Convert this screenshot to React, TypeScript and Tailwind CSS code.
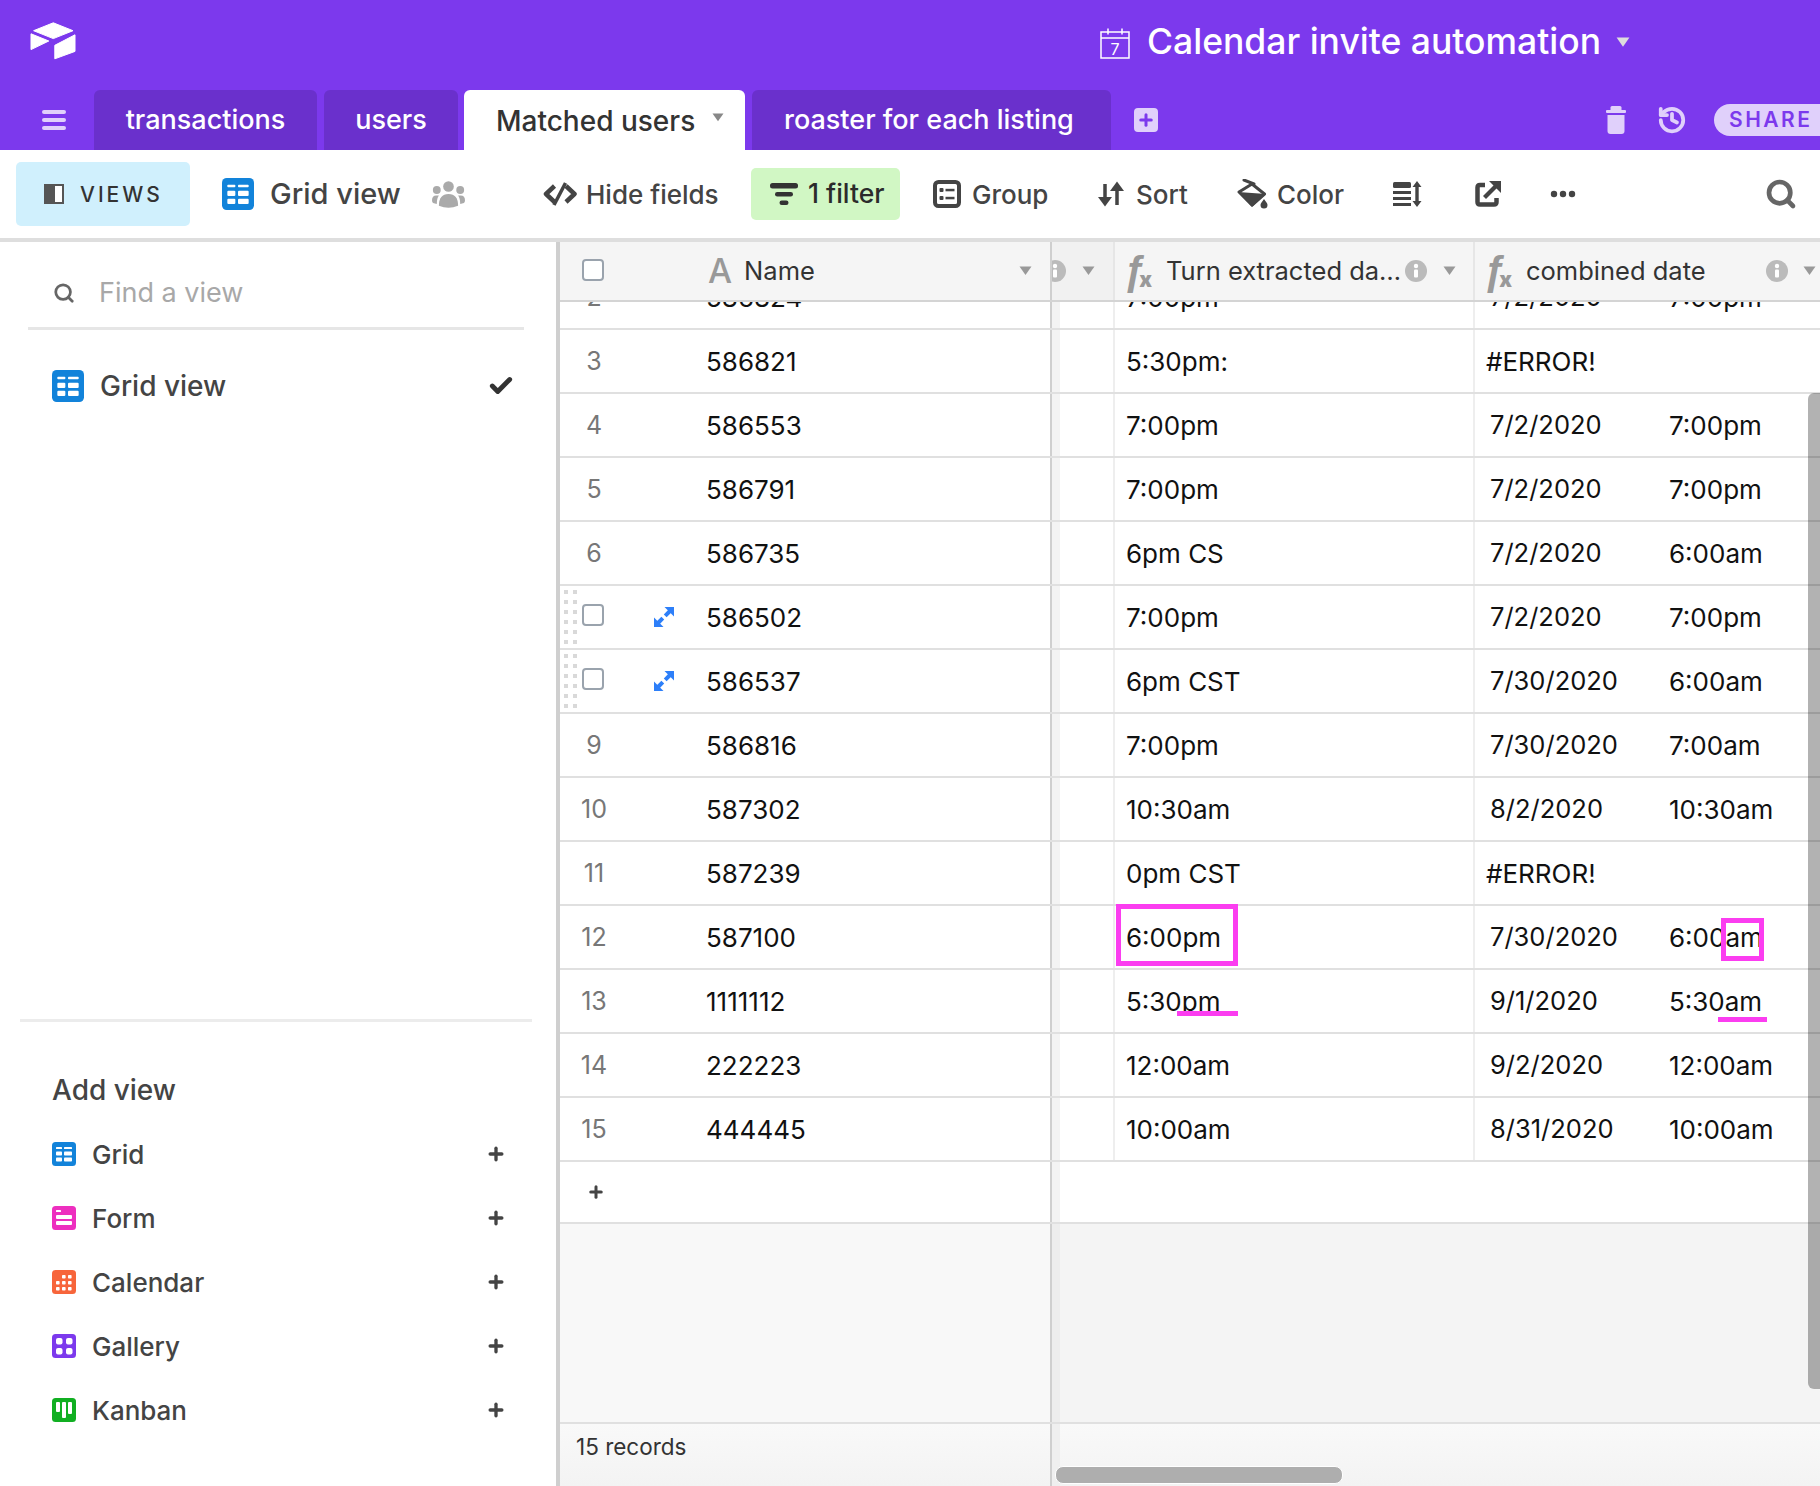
import { Check, History, Plus, Search } from "lucide-react";

const ROWS = [
  { n: "2", name: "586824", turn: "7:00pm", date: "7/2/2020", time: "7:00pm" },
  { n: "3", name: "586821", turn: "5:30pm:", date: "#ERROR!", time: "" },
  { n: "4", name: "586553", turn: "7:00pm", date: "7/2/2020", time: "7:00pm" },
  { n: "5", name: "586791", turn: "7:00pm", date: "7/2/2020", time: "7:00pm" },
  { n: "6", name: "586735", turn: "6pm CS", date: "7/2/2020", time: "6:00am" },
  { n: "7", name: "586502", turn: "7:00pm", date: "7/2/2020", time: "7:00pm", hover: true },
  { n: "8", name: "586537", turn: "6pm CST", date: "7/30/2020", time: "6:00am", hover: true },
  { n: "9", name: "586816", turn: "7:00pm", date: "7/30/2020", time: "7:00am" },
  { n: "10", name: "587302", turn: "10:30am", date: "8/2/2020", time: "10:30am" },
  { n: "11", name: "587239", turn: "0pm CST", date: "#ERROR!", time: "" },
  { n: "12", name: "587100", turn: "6:00pm", date: "7/30/2020", time: "6:00am" },
  { n: "13", name: "1111112", turn: "5:30pm", date: "9/1/2020", time: "5:30am" },
  { n: "14", name: "222223", turn: "12:00am", date: "9/2/2020", time: "12:00am" },
  { n: "15", name: "444445", turn: "10:00am", date: "8/31/2020", time: "10:00am" },
];

function Logo() {
  return (
    <svg width="46" height="38" viewBox="0 0 46 38" fill="#fff" stroke="#fff" strokeWidth="1" strokeLinejoin="round">
      <path d="M23.300 .8L43 8.700 23.300 16.600 3.600 8.700z" />
      <path d="M1 11.800L18.800 19 1 27.600z" />
      <path d="M24.800 23.300L45 12.800V29.400L24.800 36.800z" />
    </svg>
  );
}

function CalendarIcon() {
  return (
    <svg width="30" height="32" viewBox="0 0 30 32" fill="none" stroke="#fff" strokeWidth="1.5">
      <rect x="1" y="5" width="28" height="26" />
      <path d="M1 11h28M8 1.500v6M22 1.500v6" />
      <text x="15" y="28" textAnchor="middle" fontSize="16" fill="#fff" stroke="none" fontFamily="Inter, sans-serif">
        7
      </text>
    </svg>
  );
}

function Caret({ color = "#999", w = 13 }: { color?: string; w?: number }) {
  return (
    <svg width={w} height={w * 0.72} viewBox="0 0 13 9.400" fill={color}>
      <path d="M.5 .5h12L6.500 9z" />
    </svg>
  );
}

function Info() {
  return (
    <svg width="22" height="22" viewBox="0 0 22 22">
      <circle cx="11" cy="11" r="11" fill="#bbb" />
      <rect x="9" y="9.500" width="4" height="8" rx="1" fill="#fff" />
      <circle cx="11" cy="6" r="2.200" fill="#fff" />
    </svg>
  );
}

function Fx() {
  return (
    <span className="flex items-baseline w-[30px] h-[34px] leading-[34px] text-[#999] overflow-visible">
      <span className="text-[40px] font-bold italic font-['Liberation_Sans',sans-serif] -ml-[3px]">ƒ</span>
      <span className="text-[21px] font-black -ml-[6px] translate-y-[2px]">x</span>
    </span>
  );
}

function ViewIcon({ type, size }: { type: string; size: number }) {
  const colors: Record<string, string> = {
    Grid: "#1283da",
    Form: "#ed2fbf",
    Calendar: "#f7653b",
    Gallery: "#7c39ed",
    Kanban: "#11af22",
  };
  return (
    <svg width={size} height={size} viewBox="0 0 24 24" className="shrink-0">
      <rect width="24" height="24" rx="3.500" fill={colors[type]} />
      <g fill="#fff">
        {type === "Grid" && (
          <>
            <rect x="4" y="5" width="6" height="2" rx=".6" />
            <rect x="12" y="5" width="8" height="2" rx=".6" />
            <rect x="4" y="9.500" width="6" height="4" rx=".8" />
            <rect x="12" y="9.500" width="8" height="4" rx=".8" />
            <rect x="4" y="15.500" width="6" height="4" rx=".8" />
            <rect x="12" y="15.500" width="8" height="4" rx=".8" />
          </>
        )}
        {type === "Form" && (
          <>
            <rect x="4" y="4" width="5" height="2" rx=".6" />
            <rect x="4" y="9" width="16" height="4" rx="1" />
            <rect x="4" y="15" width="16" height="4" rx="1" />
          </>
        )}
        {type === "Calendar" &&
          [
            [10, 5],
            [16, 5],
            [4, 11],
            [10, 11],
            [16, 11],
            [4, 17],
            [10, 17],
            [16, 17],
          ].map(([x, y]) => <rect key={`${x}-${y}`} x={x} y={y} width="3.600" height="3.600" rx=".8" />)}
        {type === "Gallery" &&
          [
            [4, 4],
            [14, 4],
            [4, 14],
            [14, 14],
          ].map(([x, y]) => <rect key={`${x}-${y}`} x={x} y={y} width="6.500" height="6.500" rx="2" />)}
        {type === "Kanban" && (
          <>
            <rect x="4" y="4" width="4" height="10" rx="1" />
            <rect x="10" y="4" width="4" height="16" rx="1" />
            <rect x="16" y="4" width="4" height="12" rx="1" />
          </>
        )}
      </g>
    </svg>
  );
}

function Expand() {
  return (
    <svg width="20" height="20" viewBox="0 0 20 20" fill="#2d7ff9">
      <path d="M10.500 0H20V9.500z" />
      <path d="M0 10.500L9.500 20H0z" />
      <path d="M4 16L8.800 11.200M11.200 8.800L16 4" stroke="#2d7ff9" strokeWidth="4" />
    </svg>
  );
}

function Checkbox() {
  return <span className="block w-[22px] h-[22px] rounded-[4px] border-2 border-[#9aa3ad] bg-white" />;
}

function DragDots() {
  const ys = [0, 10, 20, 30, 40, 50];
  return (
    <svg width="13" height="54" viewBox="0 0 13 54" fill="#d9d9d9">
      {ys.map((y) => (
        <g key={y}>
          <rect x="0" y={y} width="4" height="4" />
          <rect x="9" y={y} width="4" height="4" />
        </g>
      ))}
    </svg>
  );
}

function Toolbar() {
  return (
    <div className="h-[92px] border-b-4 border-[#dedede] flex items-center text-[#444] font-medium text-[26px] shrink-0">
      <div className="ml-[16px] w-[174px] h-[64px] shrink-0 rounded-[5px] bg-[#d0f0fd] flex items-center pl-[28px]">
        <svg width="20" height="20" viewBox="0 0 20 20">
          <rect x="1" y="1" width="18" height="18" fill="#fff" stroke="#555" strokeWidth="2" />
          <rect x="1" y="1" width="10" height="18" fill="#555" />
        </svg>
        <span className="ml-[16px] mt-[2px] text-[21px] tracking-[3px] text-[#333]">VIEWS</span>
      </div>
      <span className="ml-[32px] shrink-0">
        <ViewIcon type="Grid" size={32} />
      </span>
      <span className="ml-[16px] text-[29px] w-[144px] shrink-0 whitespace-nowrap">Grid view</span>
      <svg width="33" height="27" viewBox="0 0 31 25" fill="#aaa" className="ml-[18px] -mr-[3px] shrink-0">
        <circle cx="15.500" cy="5" r="5" />
        <circle cx="4.500" cy="8.300" r="3.700" />
        <circle cx="26.500" cy="8.300" r="3.700" />
        <path d="M6.500 23Q6.500 12 15.500 12Q24.500 12 24.500 23Q15.500 27 6.500 23z" />
        <path d="M0 18Q0 13.500 4 13.500H6.500Q4.500 16 4.500 21.500L1 20.500Q0 20 0 18z" />
        <path d="M31 18Q31 13.500 27 13.500H24.500Q26.500 16 26.500 21.500L30 20.500Q31 20 31 18z" />
      </svg>
      <svg width="34" height="26" viewBox="0 0 34 24" fill="none" stroke="#444" strokeWidth="4.500" strokeLinejoin="round" className="ml-[81px] shrink-0">
        <path d="M11.500 4L3 12l8.500 8" />
        <path d="M23 4l8.500 8-8.500 8" />
        <path d="M22.500 1L11 23" strokeWidth="3.500" />
      </svg>
      <span className="ml-[9px] w-[132px] shrink-0 whitespace-nowrap">Hide fields</span>
      <div className="ml-[33px] w-[149px] h-[52px] shrink-0 rounded-[5px] bg-[#d1f7c4] flex items-center pl-[19px] text-[#2b2b2b]">
        <svg width="28" height="24" viewBox="0 0 28 24" fill="#333">
          <rect x="0" y="1" width="28" height="5.500" rx="2.500" />
          <rect x="5" y="10" width="18" height="4.500" rx="2.200" />
          <rect x="9.500" y="18.500" width="9" height="4.500" rx="2.200" />
        </svg>
        <span className="ml-[10px] text-[26.500px]">1 filter</span>
      </div>
      <svg width="28" height="28" viewBox="0 0 28 28" fill="#444" className="ml-[33px] shrink-0">
        <rect x="2" y="2" width="24" height="24" rx="3.500" fill="none" stroke="#444" strokeWidth="4" />
        <rect x="6.500" y="8" width="4" height="4" rx="1" />
        <rect x="6.500" y="16" width="4" height="4" rx="1" />
        <rect x="12.500" y="8.800" width="9" height="2.500" />
        <rect x="12.500" y="16.800" width="9" height="2.500" />
      </svg>
      <span className="ml-[11px] w-[75px] shrink-0">Group</span>
      <svg width="26" height="26" viewBox="0 0 26 26" fill="#444" className="ml-[51px] shrink-0">
        <path d="M7 3v18M19 24V6" stroke="#444" strokeWidth="3.500" />
        <path d="M0 16h14l-7 9.500z" />
        <path d="M12 10h14L19 .5z" />
      </svg>
      <span className="ml-[12px] w-[52px] shrink-0">Sort</span>
      <svg width="31" height="30" viewBox="0 0 31 30" fill="#444" className="ml-[49px] shrink-0">
        <path d="M7 1L17 5" stroke="#444" strokeWidth="3" strokeLinecap="round" />
        <path d="M2 13L15 5l12.500 10L15 26z" fill="#fff" stroke="#444" strokeWidth="3" strokeLinejoin="round" />
        <path d="M1 13L29 15 15 28z" />
        <path d="M27 20c-2 3-3.500 4-3.500 6a3.500 3.500 0 0 0 7 0c0-2-1.500-3-3.500-6z" />
      </svg>
      <span className="ml-[9px] w-[66px] shrink-0">Color</span>
      <svg width="29" height="26" viewBox="0 0 29 26" className="ml-[50px] shrink-0" fill="#444">
        <rect x="0" y="1" width="18" height="6" rx="1.500" />
        <rect x="0" y="10" width="18" height="3" />
        <rect x="0" y="16" width="18" height="3" />
        <rect x="0" y="22" width="18" height="3" />
        <path d="M24 5v17" stroke="#444" strokeWidth="3.400" />
        <path d="M24 0l4.500 6h-9zM24 26l4.500-6h-9z" />
      </svg>
      <svg width="26" height="26" viewBox="0 0 26 26" fill="none" stroke="#444" strokeWidth="4.500" className="ml-[53px] shrink-0">
        <path d="M10 4H5Q2.500 4 2.500 6.500v14.500Q2.500 23.500 5 23.500h14q2.500 0 2.500-2.500V17" />
        <path d="M9.500 16.500L21 5" strokeWidth="4.200" />
        <path d="M14 0h12v12z" fill="#444" stroke="none" />
      </svg>
      <svg width="26" height="8" viewBox="0 0 26 8" fill="#444" className="ml-[49px] shrink-0">
        <circle cx="4" cy="4" r="3.200" />
        <circle cx="13" cy="4" r="3.200" />
        <circle cx="22" cy="4" r="3.200" />
      </svg>
      <Search size={32} strokeWidth={3.500} className="ml-auto mr-[23px] shrink-0 text-[#666]" />
    </div>
  );
}

function Sidebar() {
  return (
    <aside className="w-[560px] shrink-0 h-full border-r-4 border-[#cfcfcf] flex flex-col text-[#444]">
      <div className="mt-[24px] ml-[28px] mr-[32px] h-[64px] border-b-[3px] border-[#e6e6e6] flex items-center pb-[8px]">
        <Search size={22} strokeWidth={3} className="ml-[25px] text-[#666]" />
        <span className="ml-[24px] mt-[1px] text-[27px] text-[#a8a8a8]">Find a view</span>
      </div>
      <div className="mt-[26px] h-[60px] flex items-center pl-[52px] pr-[42px]">
        <ViewIcon type="Grid" size={32} />
        <span className="ml-[16px] text-[28px] font-medium">Grid view</span>
        <Check size={26} strokeWidth={4.500} className="ml-auto text-[#333]" />
      </div>
      <div className="mt-auto ml-[20px] mr-[24px] h-[3px] bg-[#ececec]" />
      <div className="mt-[50px] pl-[52px] text-[28px] font-medium leading-[36px]">Add view</div>
      <div className="mt-[14px] mb-[44px]">
        {["Grid", "Form", "Calendar", "Gallery", "Kanban"].map((v) => (
          <div key={v} className="h-[64px] flex items-center pl-[52px] pr-[50px]">
            <ViewIcon type={v} size={24} />
            <span className="ml-[16px] text-[26px] font-medium">{v}</span>
            <Plus size={20} strokeWidth={4} className="ml-auto text-[#444]" />
          </div>
        ))}
      </div>
    </aside>
  );
}

function GridHeader() {
  return (
    <div className="h-[60px] shrink-0 flex bg-[#f5f5f5] border-b-2 border-[#d4d4d4] text-[25.500px] text-[#333] z-10">
      <div className="w-[492px] shrink-0 border-r-2 border-[#cfcfcf] flex items-center">
        <span className="ml-[22px] -mt-[3px]">
          <Checkbox />
        </span>
        <span className="ml-[104px] text-[34px] leading-none font-medium text-[#999]">A</span>
        <span className="ml-[12px]">Name</span>
        <span className="ml-auto mr-[18px]">
          <Caret />
        </span>
      </div>
      <div className="w-[61px] shrink-0 flex items-center overflow-hidden bg-[#ececec]/40">
        <span className="-ml-[8px]">
          <Info />
        </span>
        <span className="ml-[16px]">
          <Caret />
        </span>
      </div>
      <div className="w-[360px] shrink-0 border-l-2 border-[#e6e6e6] flex items-center pl-[11px]">
        <Fx />
        <span className="ml-[10px] whitespace-nowrap">Turn extracted da…</span>
        <span className="ml-auto">
          <Info />
        </span>
        <span className="ml-[16px] mr-[17px]">
          <Caret />
        </span>
      </div>
      <div className="flex-1 border-l-2 border-[#e6e6e6] flex items-center pl-[11px]">
        <Fx />
        <span className="ml-[10px]">combined date</span>
        <span className="ml-auto">
          <Info />
        </span>
        <span className="ml-[15px] mr-[4px]">
          <Caret />
        </span>
      </div>
    </div>
  );
}

function Row({ row, first }: { row: (typeof ROWS)[number]; first: boolean }) {
  const isError = row.date === "#ERROR!";
  return (
    <div className={`h-[64px] shrink-0 flex border-b-2 border-[#e0e0e0] text-[26px] text-[#111] ${first ? "-mt-[36px]" : ""}`}>
      <div className="w-[492px] shrink-0 border-r-2 border-[#cfcfcf] flex items-center relative">
        {row.hover ? (
          <>
            <span className="absolute left-[4px] top-[4px] leading-none">
              <DragDots />
            </span>
            <span className="ml-[22px] -mt-[4px]">
              <Checkbox />
            </span>
            <span className="ml-[50px]">
              <Expand />
            </span>
            <span className="ml-[32px]">{row.name}</span>
          </>
        ) : (
          <>
            <span className="w-[68px] text-center text-[#777] text-[25px] mt-[2px]">{row.n}</span>
            <span className="ml-[78px]">{row.name}</span>
          </>
        )}
      </div>
      <div className="w-[61px] shrink-0 bg-[linear-gradient(90deg,#f3f3f3_0,#f3f3f3_8px,#fff_8px)]" />
      <div className="w-[360px] shrink-0 border-l-2 border-[#eee] flex items-center pl-[11px]">{row.turn}</div>
      <div className={`flex-1 border-l-2 border-[#eee] flex items-center ${isError ? "pl-[11px]" : "pl-[15px]"}`}>
        <span className={`w-[179px] shrink-0 ${isError ? "" : "text-[25.500px]"}`}>{row.date}</span>
        <span>{row.time}</span>
      </div>
    </div>
  );
}

function GridPane() {
  return (
    <div className="flex-1 h-full flex flex-col relative overflow-hidden">
      <GridHeader />
      <div className="flex-1 flex flex-col overflow-hidden">
        {ROWS.map((r, i) => (
          <Row key={r.n} row={r} first={i === 0} />
        ))}
        <div className="h-[62px] shrink-0 flex border-b-2 border-[#e0e0e0]">
          <div className="w-[492px] shrink-0 border-r-2 border-[#cfcfcf] flex items-center pl-[27px]">
            <Plus size={18} strokeWidth={4} className="text-[#444]" />
          </div>
          <div className="w-[8px] bg-[#f3f3f3]" />
        </div>
        <div className="flex-1 flex">
          <div className="w-[492px] shrink-0 bg-[#f8f8f8] border-r-2 border-[#cfcfcf]" />
          <div className="w-[8px] bg-[#ededed]" />
          <div className="flex-1 bg-[#f4f4f4]" />
        </div>
        <div className="h-[64px] shrink-0 flex border-t-2 border-[#e0e0e0] bg-gradient-to-b from-[#f9f9f9] to-[#f3f3f3]">
          <div className="w-[492px] shrink-0 border-r-2 border-[#cfcfcf] pl-[16px] pt-[6px] text-[22.500px] text-[#333]">15 records</div>
          <div className="w-[8px] bg-[#efefef]" />
        </div>
      </div>
      {/* annotation marks drawn over the screenshot */}
      <div className="absolute left-[556px] top-[662px] w-[122px] h-[62px] border-[5px] border-[#fb3df0]" />
      <div className="absolute left-[1161px] top-[676px] w-[43px] h-[43px] border-[5px] border-[#fb3df0]" />
      <div className="absolute left-[617px] top-[769px] w-[61px] h-[5px] bg-[#fb3df0]" />
      <div className="absolute left-[1158px] top-[775px] w-[49px] h-[5px] bg-[#fb3df0]" />
      {/* scrollbars */}
      <div className="absolute left-[1248px] top-[151px] w-[12px] h-[996px] rounded-l-[6px] bg-black/30" />
      <div className="absolute left-[495px] top-[1224px] w-[288px] h-[18px] rounded-[8px] bg-[#aeaeae] border border-white" />
    </div>
  );
}

export default function App() {
  return (
    <div className="w-[1820px] h-[1486px] overflow-hidden flex flex-col bg-white font-['Inter',sans-serif]">
      <header className="h-[150px] shrink-0 bg-[#7c39ed] text-white overflow-hidden">
        <div className="h-[90px] flex items-center">
          <span className="ml-[30px] -mt-[8px] shrink-0">
            <Logo />
          </span>
          <span className="ml-[1024px] -mt-[4px] shrink-0">
            <CalendarIcon />
          </span>
          <span className="ml-[17px] -mt-[6px] text-[35.500px] font-medium leading-none whitespace-nowrap shrink-0">Calendar invite automation</span>
          <span className="ml-[15px] -mt-[6px] shrink-0">
            <Caret color="#ddd" w={14} />
          </span>
        </div>
        <div className="h-[60px] flex items-stretch text-[27px] font-medium">
          <div className="w-[94px] shrink-0 flex flex-col justify-center gap-[4px] pl-[42px]">
            <span className="block w-[24px] h-[4px] rounded-full bg-[#e0d0fb]" />
            <span className="block w-[24px] h-[4px] rounded-full bg-[#e0d0fb]" />
            <span className="block w-[24px] h-[4px] rounded-full bg-[#e0d0fb]" />
          </div>
          <div className="w-[223px] shrink-0 rounded-t-[6px] bg-[#6a30cc] flex items-center justify-center pt-[1px]">transactions</div>
          <div className="ml-[7px] w-[134px] shrink-0 rounded-t-[6px] bg-[#6a30cc] flex items-center justify-center pt-[1px]">users</div>
          <div className="ml-[6px] w-[281px] shrink-0 rounded-t-[6px] bg-white text-[#333] flex items-center pl-[32px] pt-[1px] text-[28px] whitespace-nowrap">
            Matched users
            <span className="ml-[17px] -mt-[6px]">
              <Caret color="#888" w={12} />
            </span>
          </div>
          <div className="ml-[7px] w-[359px] shrink-0 rounded-t-[6px] bg-[#6a30cc] flex items-center pl-[32px] pt-[1px] whitespace-nowrap">roaster for each listing</div>
          <div className="ml-[23px] self-center w-[24px] h-[24px] shrink-0 rounded-[4px] bg-[#e0d0fb] flex items-center justify-center text-[#7c39ed]">
            <Plus size={18} strokeWidth={4} />
          </div>
          <svg width="20" height="28" viewBox="0 0 20 28" fill="#e0d0fb" className="ml-[448px] self-center shrink-0">
            <path d="M6 0h8q1.500 0 1.500 1.500V4H4.500V1.500Q4.500 0 6 0z" />
            <rect x="0" y="4" width="20" height="3" rx="1" />
            <path d="M1.500 9h17v16q0 3-3 3h-11q-3 0-3-3z" />
          </svg>
          <History size={30} strokeWidth={3} className="ml-[31px] self-center shrink-0 text-[#e0d0fb]" />
          <div className="ml-[27px] self-center h-[32px] w-[120px] shrink-0 rounded-l-[16px] bg-[#e0d0fb] text-[#7c39ed] text-[21px] font-semibold tracking-[2.500px] pl-[15px] flex items-center">
            SHARE
          </div>
        </div>
      </header>
      <Toolbar />
      <main className="flex-1 flex min-h-0">
        <Sidebar />
        <GridPane />
      </main>
    </div>
  );
}
